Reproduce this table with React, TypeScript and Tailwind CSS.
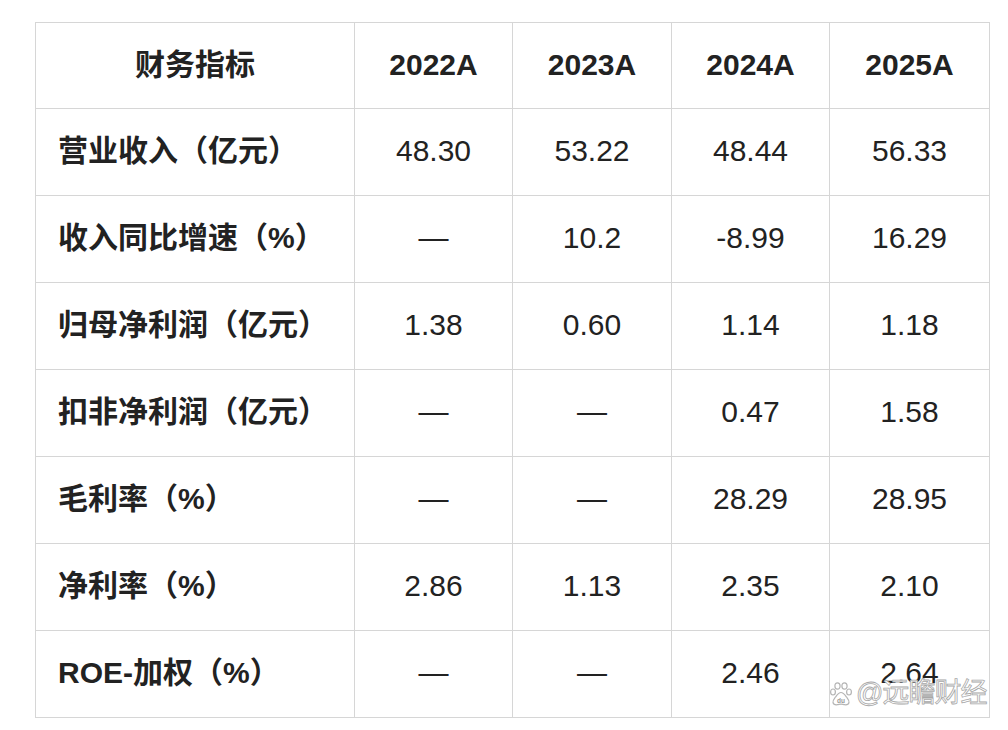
const years = ["2022A", "2023A", "2024A", "2025A"];

const rows: { label: string; values: string[] }[] = [
  { label: "营业收入（亿元）", values: ["48.30", "53.22", "48.44", "56.33"] },
  { label: "收入同比增速（%）", values: ["—", "10.2", "-8.99", "16.29"] },
  { label: "归母净利润（亿元）", values: ["1.38", "0.60", "1.14", "1.18"] },
  { label: "扣非净利润（亿元）", values: ["—", "—", "0.47", "1.58"] },
  { label: "毛利率（%）", values: ["—", "—", "28.29", "28.95"] },
  { label: "净利率（%）", values: ["2.86", "1.13", "2.35", "2.10"] },
  { label: "ROE-加权（%）", values: ["—", "—", "2.46", "2.64"] },
];

const font = "font-['Liberation_Sans','Noto_Sans_CJK_SC',sans-serif]";

function Paw() {
  return (
    <svg width="22" height="24" viewBox="0 0 22 24" className="shrink-0">
      <g fill="#fff" stroke="#b5b5b5" strokeWidth="1.2">
        <ellipse cx="7.5" cy="4" rx="2.6" ry="3.2" />
        <ellipse cx="14.5" cy="4" rx="2.6" ry="3.2" />
        <ellipse cx="3" cy="10" rx="2.4" ry="3" />
        <ellipse cx="19" cy="10" rx="2.4" ry="3" />
        <path d="M11 10.5c-2.5 0-4 2.5-5.5 4.5-1.5 2-3 3.5-2.5 5.5.5 2 2.5 2.5 4.5 2.2 1.3-.2 2.3-.6 3.5-.6s2.2.4 3.5.6c2 .3 4-.2 4.5-2.2.5-2-1-3.5-2.5-5.5-1.5-2-3-4.5-5.5-4.5z" />
      </g>
      <text x="11" y="20.5" textAnchor="middle" fontSize="6.5" fill="#9a9a9a" fontFamily="Liberation Sans, sans-serif" fontWeight="700">du</text>
    </svg>
  );
}

export default function App() {
  return (
    <div className={`relative w-[1008px] h-[730px] bg-white ${font} text-[#222]`}>
      <div className="pt-[22px] pl-[35px]">
        <table className="border-collapse table-fixed w-[954px]">
          <colgroup>
            <col className="w-[319px]" />
            <col className="w-[158px]" />
            <col className="w-[159px]" />
            <col className="w-[158px]" />
            <col className="w-[160px]" />
          </colgroup>
          <thead>
            <tr className="h-[86px]">
              <th className="border border-[#d6d6d6] pb-[3px] text-[30px] font-bold text-center">财务指标</th>
              {years.map((y) => (
                <th key={y} className="border border-[#d6d6d6] pb-[3px] text-[30px] font-bold text-center">
                  {y}
                </th>
              ))}
            </tr>
          </thead>
          <tbody>
            {rows.map((r) => (
              <tr key={r.label} className="h-[87px]">
                <td className="border border-[#d6d6d6] pl-[22px] pb-[3px] text-[30px] font-bold whitespace-nowrap">
                  {r.label}
                </td>
                {r.values.map((v, i) => (
                  <td key={i} className="border border-[#d6d6d6] pb-[3px] text-center text-[30px]">
                    {v}
                  </td>
                ))}
              </tr>
            ))}
          </tbody>
        </table>
      </div>

      {/* watermark */}
      <div className="absolute left-[830px] top-[680px] flex items-center gap-[4px]">
        <Paw />
        <span
          className="text-[27px] leading-none text-white tracking-[-1px]"
          style={{ WebkitTextStroke: "0.8px #a8a8a8" }}
        >
          @远瞻财经
        </span>
      </div>
    </div>
  );
}
